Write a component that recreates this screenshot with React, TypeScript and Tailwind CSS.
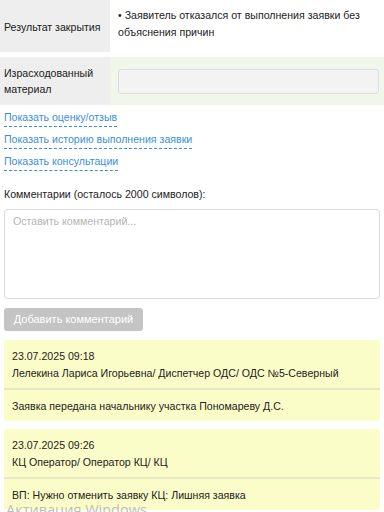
export default function App() {
  const font = { fontFamily: '"Liberation Sans", Arial, sans-serif' };
  return (
    <div className="relative h-[512px] w-[384px] overflow-hidden bg-white text-[10.6px] leading-[17px] text-[#222]" style={font}>
      {/* info table */}
      <div className="flex flex-col gap-[5px]">
        <div className="flex h-[52px]">
          <div className="flex w-[110px] shrink-0 items-center bg-[#eeeeee] px-[4px] pt-[2px]">Результат закрытия</div>
          <div className="flex flex-1 items-center bg-white pl-[8px] pr-[16px]">
            <div className="mb-[4px]">• Заявитель отказался от выполнения заявки без объяснения причин</div>
          </div>
        </div>
        <div className="flex h-[48px]">
          <div className="flex w-[110px] shrink-0 items-center bg-[#eeeeee] px-[4px] leading-[16px]">Израсходованный материал</div>
          <div className="flex flex-1 items-center bg-[#f1f6ea] pl-[8px] pr-[5px]">
            <div className="h-[25px] w-full rounded-[3px] border border-[#dcdcdc] bg-[#f3f3f3]" />
          </div>
        </div>
      </div>

      {/* links */}
      <div className="mt-[4px] flex flex-col items-start gap-[4px] px-[4px]">
        {["Показать оценку/отзыв", "Показать историю выполнения заявки", "Показать консультации"].map((t) => (
          <span key={t} className="border-b border-dashed border-[#3a8fdc] pb-[1px] leading-[16px] text-[#3a8fdc]">
            {t}
          </span>
        ))}
      </div>

      <div className="mt-[15px] px-[4px]">Комментарии (осталось 2000 символов):</div>

      <div className="mx-[4px] mt-[6px] h-[90px] rounded-[3px] border border-[#dcdcdc] bg-white px-[8px] pt-[3px] text-[#b5b5b5]">
        Оставить комментарий...
      </div>

      <div className="ml-[4px] mt-[9px] flex h-[23px] w-[139px] items-center justify-center rounded-[3px] bg-[#c4c4c4] text-[11px] text-white">
        Добавить комментарий
      </div>

      {/* cards */}
      <div className="mx-[4px] mt-[9px] flex flex-col gap-[8px]">
        {[
          ["23.07.2025 09:18", "Лелекина Лариса Игорьевна/ Диспетчер ОДС/ ОДС №5-Северный", "Заявка передана начальнику участка Пономареву Д.С."],
          ["23.07.2025 09:26", "КЦ Оператор/ Оператор КЦ/ КЦ", "ВП: Нужно отменить заявку КЦ: Лишняя заявка"],
        ].map(([d, n, t]) => (
          <div key={d} className="rounded-[3px] bg-[#fbfdc9]">
            <div className="border-b-2 border-[#e6e8c4] px-[8px] pb-[6px] pt-[8px]">
              <div>{d}</div>
              <div>{n}</div>
            </div>
            <div className="px-[8px] pb-[6px] pt-[8px]">{t}</div>
          </div>
        ))}
      </div>

      <div className="pointer-events-none absolute left-[6px] top-[500px] text-[14.5px] leading-[20px] text-[#bdbdbd]" style={{ fontFamily: '"Open Sans", "Liberation Sans", sans-serif' }}>
        Активация Windows
      </div>
    </div>
  );
}
